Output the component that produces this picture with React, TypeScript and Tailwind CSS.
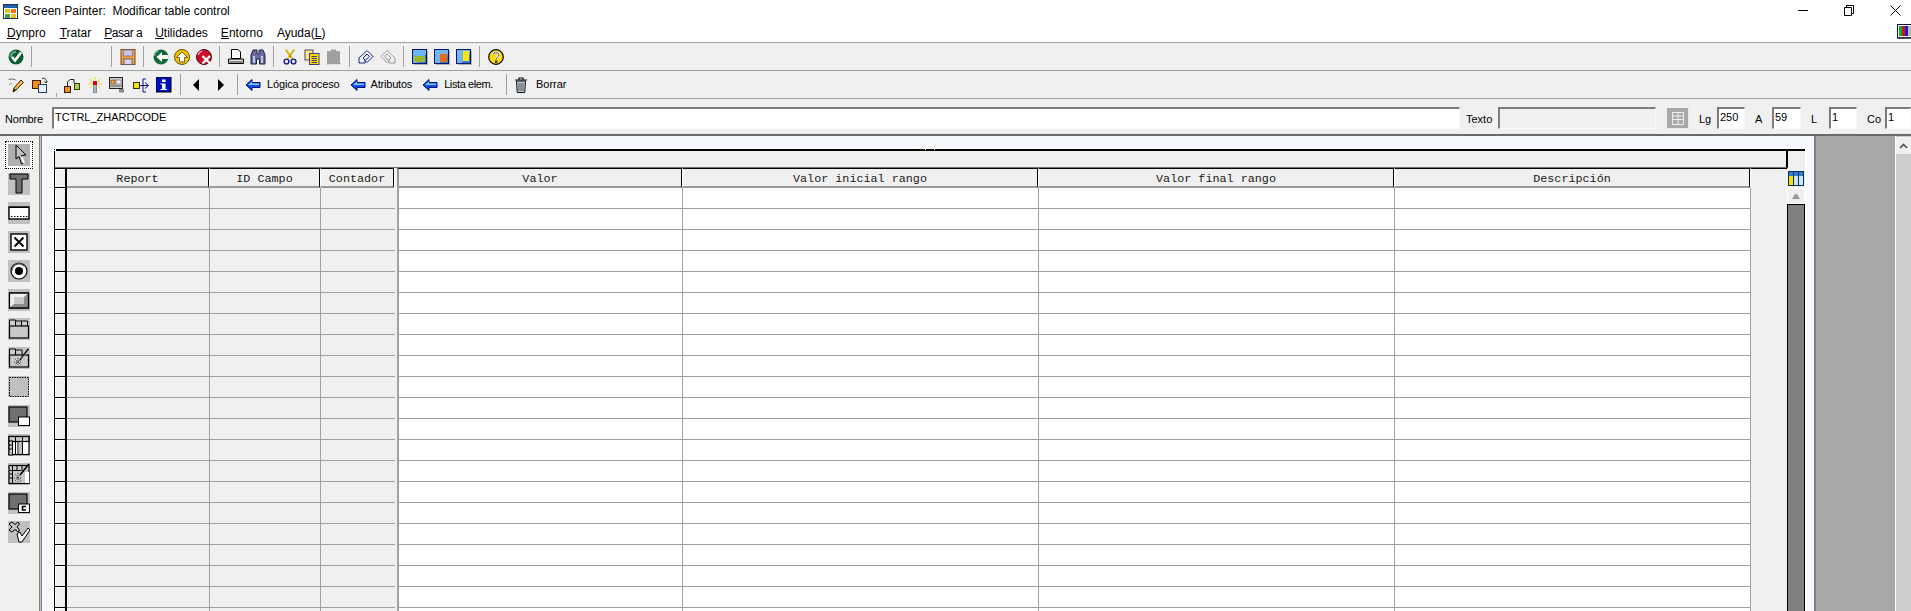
import React from "react";

const Ico = ({ children, w = 16, h = 16, cls = "" }: { children: React.ReactNode; w?: number; h?: number; cls?: string }) => (
  <svg width={w} height={h} viewBox={`0 0 ${w} ${h}`} className={"block shrink-0 " + cls}>{children}</svg>
);

const Sep = ({ cls }: { cls: string }) => <div className={"w-px h-[21px] bg-[#a0a0a0] shrink-0 " + cls} />;

const Arrow = ({ cls }: { cls: string }) => (
  <Ico cls={cls}>
    <path d="M1 8 L7 2.5 V5.5 H15 V10.5 H7 V13.5 Z" fill="#0a50f0" stroke="#000a78" strokeWidth="1" />
    <path d="M3 8 L7 4.5 V6.5 H14 V8 H3Z" fill="#8ccaff" />
  </Ico>
);

const Check = () => (
  <Ico>
    <circle cx="8" cy="8" r="7.5" fill="#0c5c34" />
    <path d="M1.5 8 A6.5 6.5 0 0 1 8 1.5 V4 A4 4 0 0 0 4 8Z" fill="#5fa77e" />
    <path d="M4 8 L7 11.5 L13 3.5" fill="none" stroke="#fff" strokeWidth="2.6" />
  </Ico>
);
const Save = () => (
  <Ico>
    <rect x="1" y="0.5" width="14" height="15" fill="#f0a040" stroke="#7a4a10" />
    <rect x="3.5" y="1" width="9" height="6" fill="#c9c5e8" stroke="#7a6a90" strokeWidth="0.7" />
    <rect x="4" y="10" width="8" height="5.5" fill="#d8d4f0" stroke="#5a4a70" strokeWidth="0.8" />
  </Ico>
);
const Back = () => (
  <Ico>
    <circle cx="8" cy="8" r="7.5" fill="#0c6a3c" />
    <path d="M3.5 8 L9 3 V6 H15.5 V10 H9 V13 Z" fill="#fff" />
    <path d="M1.5 7 A6.5 6.5 0 0 1 6 1.8" stroke="#6fb58c" strokeWidth="1.2" fill="none" />
  </Ico>
);
const Up = () => (
  <Ico>
    <circle cx="8" cy="8" r="7.5" fill="#f5c400" stroke="#6a5000" />
    <path d="M8 3 L13.5 8.5 H10.5 V13 H5.5 V8.5 H2.5 Z" fill="#fff" stroke="#403000" strokeWidth="0.7" />
  </Ico>
);
const Cancel = () => (
  <Ico>
    <circle cx="8" cy="8" r="7.5" fill="#c8102e" stroke="#4a0a10" />
    <path d="M2 6 A6 6 0 0 1 6 2" stroke="#ff9aa8" strokeWidth="1.5" fill="none" />
    <path d="M6.5 7 L14 14.5 M14 7 L6.5 14.5" stroke="#fff" strokeWidth="2.4" />
  </Ico>
);
const Print = () => (
  <Ico>
    <path d="M3.5 0.5 H10 L12.5 3 V9.5 H3.5Z" fill="#fff" stroke="#000" />
    <path d="M0.5 10 H15.5 V14.5 H0.5Z" fill="#e0e0e0" stroke="#000" />
    <rect x="1.5" y="12" width="13" height="2" fill="#8a8a8a" />
  </Ico>
);
const Find = () => (
  <Ico>
    <path d="M1 6 L3 1 H7 V5 H9 V1 H13 L15 6 V15 H9.5 V10 H6.5 V15 H1Z" fill="#6a6aa0" stroke="#20204a" />
    <rect x="3" y="7" width="2" height="7" fill="#c8c8e0" />
    <rect x="11" y="7" width="2" height="7" fill="#c8c8e0" />
  </Ico>
);
const Cut = () => (
  <Ico>
    <path d="M4 0.5 L10.5 10 M12 0.5 L5.5 10" stroke="#e8c800" strokeWidth="1.6" />
    <path d="M3.6 0.5 L9 9 M12.4 0.5 L7 9" stroke="#5a4a00" strokeWidth="0.4" />
    <circle cx="4.5" cy="12.5" r="2.4" fill="none" stroke="#1a1a9a" strokeWidth="1.4" />
    <circle cx="11.5" cy="12.5" r="2.4" fill="none" stroke="#1a1a9a" strokeWidth="1.4" />
  </Ico>
);
const Copy = () => (
  <Ico>
    <rect x="1" y="1" width="8" height="10" fill="#ffe680" stroke="#4a4a6a" />
    <rect x="5.5" y="4.5" width="9.5" height="11" fill="#ffe000" stroke="#3a3a80" />
    <path d="M7.5 7.5 H13 M7.5 9.5 H13 M7.5 11.5 H13 M7.5 13.5 H13" stroke="#3a3a80" strokeWidth="1" />
  </Ico>
);
const Paste = () => (
  <Ico>
    <path d="M1 2 H5 V0.5 H10 V2 H14 V14 H15.5 V15.5 H1Z" fill="#a0a0a0" />
    <path d="M15 5 H16 V16 H3 V15.5 H15Z" fill="#fff" />
  </Ico>
);
const Undo = ({ c }: { c: string }) => (
  <Ico>
    <path d="M1 9 L9 1.5 L15 7.5 L9 13.5 L7 11.5 L11.5 7.5 L9 5 L5 9 L7 11 V14 H1Z" fill="#f8f8ff" stroke={c} strokeWidth="1" />
  </Ico>
);
const Redo = ({ c }: { c: string }) => (
  <Ico>
    <path d="M15 9 L7 1.5 L1 7.5 L7 13.5 L9 11.5 L4.5 7.5 L7 5 L11 9 L9 11 V14 H15Z" fill="#f0f0f0" stroke={c} strokeWidth="1" />
  </Ico>
);
const Layout = ({ v }: { v: number }) => (
  <Ico>
    <rect x="0.5" y="0.5" width="14" height="14" fill="#2e7fd8" stroke="#00146e" />
    <path d="M1 1 H14 V5 L5 14 H1Z" fill="#6fb6ee" />
    <rect x="15" y="2" width="1" height="14" fill="#b0b0b0" />
    <rect x="2" y="15" width="14" height="1" fill="#b0b0b0" />
    {v === 1 && <rect x="2" y="7" width="11" height="6" fill="#9cb82c" />}
    {v === 2 && <rect x="6" y="5" width="7" height="8" fill="#f06a10" />}
    {v === 3 && <rect x="7" y="2" width="6" height="10" fill="#ffe400" />}
  </Ico>
);
const Help = () => (
  <Ico>
    <circle cx="8" cy="8" r="7.3" fill="#ffdc00" stroke="#000" strokeWidth="1.2" />
    <path d="M5 6 C5 3 11 3 11 6 C11 8 8 8 8 10.5" fill="none" stroke="#fff" strokeWidth="2.6" />
    <path d="M5 6 C5 3 11 3 11 6 C11 8 8 8 8 10.5" fill="none" stroke="#333" strokeWidth="0.9" />
    <rect x="7" y="11.5" width="2.4" height="2.4" fill="#333" />
  </Ico>
);
const Pencil = () => (
  <Ico>
    <path d="M5 15 L6 11 L13 3 L15.5 5.5 L8 13Z" fill="#f0b840" stroke="#402000" />
    <path d="M5 15 L6 11.5 L8 13Z" fill="#222" />
    <path d="M0.5 3 C2 0.5 3 4 4.5 1.5 C5.5 4 7 1 8 3.5" fill="none" stroke="#555" strokeWidth="1" />
    <path d="M1 8 C2 6 3 8 4 6" fill="none" stroke="#888" strokeWidth="1" />
  </Ico>
);
const Swap = () => (
  <Ico>
    <rect x="0.5" y="3.5" width="8" height="8" fill="#f08c20" stroke="#402000" />
    <rect x="6.5" y="7.5" width="8" height="8" fill="#e8f0ff" stroke="#30405a" />
    <path d="M10 1.5 C13 0.5 15 3 14 5.5 M12.5 4.5 L14 6 L15.5 4" fill="none" stroke="#333" />
  </Ico>
);
const Tree = () => (
  <Ico>
    <rect x="0.5" y="9.5" width="6" height="6" fill="#f08c20" stroke="#302000" />
    <rect x="10.5" y="6.5" width="5" height="6" fill="#b8c860" stroke="#304000" />
    <path d="M3.5 9 V5 L6 2.5 H10 V6" fill="none" stroke="#222" />
  </Ico>
);
const Wand = () => (
  <Ico>
    <rect x="6.5" y="6" width="3" height="10" fill="#a8b8c8" stroke="#506070" strokeWidth="0.6" />
    <rect x="6" y="4" width="4" height="4" fill="#e80000" />
    <path d="M8 0 V3 M2 2 L5 4.5 M14 2 L11 4.5 M1 7 H4.5 M12 7 H15 M3 11 L5 9.5 M13 11 L11 9.5" stroke="#f0e000" strokeWidth="1" />
  </Ico>
);
const Cols = () => (
  <Ico>
    <rect x="0.5" y="0.5" width="13" height="11" fill="#d0d0d0" stroke="#202020" />
    <rect x="2" y="3" width="4" height="4" fill="#f0a040" stroke="#402000" strokeWidth="0.5" />
    <rect x="7" y="3" width="5" height="4" fill="#eee" stroke="#404040" strokeWidth="0.5" />
    <path d="M1 9 H13" stroke="#505050" />
    <rect x="10" y="12" width="5" height="3.5" fill="#8a8a8a" />
  </Ico>
);
const Flow = () => (
  <Ico>
    <rect x="0.5" y="5.5" width="6" height="6" fill="#f0e020" stroke="#303000" />
    <path d="M7 8.5 H15 M12 5.5 L15.5 8.5 L12 11.5 M10 8 L10 2 L13 2 M10 9 V15 H13" fill="none" stroke="#101090" />
  </Ico>
);
const Info = () => (
  <Ico>
    <rect x="0" y="0" width="15" height="15" fill="#0010c0" stroke="#000" />
    <rect x="6" y="2.5" width="3.5" height="2.5" fill="#fff" />
    <path d="M4.5 6.5 H9.5 V12 H11 V13 H4.5 V12 H6 V7.5 H4.5Z" fill="#fff" />
  </Ico>
);
const Trash = () => (
  <Ico>
    <path d="M2 3 H14 M6 3 V1 H10 V3" fill="none" stroke="#111" strokeWidth="1.2" />
    <path d="M3.5 4 H12.5 L11.8 15.5 H4.2Z" fill="#c0c8d0" stroke="#111" />
    <path d="M6 6 V14 M8 6 V14 M10 6 V14" stroke="#505860" />
  </Ico>
);
const TriL = ({ cls }: { cls: string }) => (
  <Ico cls={cls}><path d="M5 8 L11 2 V14 Z" fill="#000" /></Ico>
);
const TriR = ({ cls }: { cls: string }) => (
  <Ico cls={cls}><path d="M5 2 L11 8 L5 14 Z" fill="#000" /></Ico>
);

const Tool = ({ children }: { children: React.ReactNode }) => (
  <div className="w-[22px] h-[22px] bg-[#c0c0c0] shrink-0">
    <svg width="22" height="22" viewBox="0 0 22 22" className="block">{children}</svg>
  </div>
);

const tools: React.ReactNode[] = [
  <path d="M2 1 H20 V6 H14 V20 H8 V6 H2Z" fill="#707070" stroke="#000" strokeWidth="1" />,
  <>
    <rect x="1" y="5" width="20" height="12" fill="#fff" stroke="#000" strokeWidth="1.4" />
    <path d="M3 14.5 H20" stroke="#000" strokeWidth="1" strokeDasharray="1.5 1.5" />
    <path d="M1.5 5.5 H20.5" stroke="#000" strokeWidth="1" />
  </>,
  <>
    <rect x="3" y="3" width="16" height="16" fill="#fff" stroke="#000" strokeWidth="1.4" />
    <path d="M6.5 6.5 L15.5 15.5 M15.5 6.5 L6.5 15.5" stroke="#000" strokeWidth="2" />
  </>,
  <>
    <circle cx="11" cy="11" r="8" fill="#fff" stroke="#000" strokeWidth="1.2" />
    <path d="M4 11 A7 7 0 0 1 16 6" fill="none" stroke="#555" strokeWidth="1.2" />
    <circle cx="11" cy="11" r="4" fill="#000" />
  </>,
  <>
    <rect x="1.5" y="4" width="19" height="15" fill="#c8c8c8" stroke="#000" strokeWidth="1.2" />
    <path d="M2 4.5 H20 L16 8 H6 V15.5 L2 18.5Z" fill="#f0f0f0" />
    <path d="M20 4.5 V18.5 H2 L6 15 H16 V8Z" fill="#8a8a8a" />
    <rect x="1.5" y="4" width="19" height="15" fill="none" stroke="#000" strokeWidth="1.2" />
  </>,
  <>
    <path d="M1.5 8 V2 H7.5 V8 M7.5 3 H19.5 V8 M13.5 3 V8" fill="#d0d0d0" stroke="#000" strokeWidth="1" />
    <rect x="1.5" y="8" width="19" height="12" fill="#c8c8c8" stroke="#000" strokeWidth="1.2" />
  </>,
  <>
    <path d="M1.5 8 V2 H7.5 V8 M7.5 3 H14 V8" fill="#d0d0d0" stroke="#000" strokeWidth="1" />
    <rect x="1.5" y="8" width="19" height="12" fill="#c8c8c8" stroke="#000" strokeWidth="1.2" />
    <path d="M12 13 L20.5 2" stroke="#000" strokeWidth="1.6" />
    <path d="M13 12 L21 3" stroke="#fff" strokeWidth="0.5" />
    <path d="M7 12 L13 18 M13 12 L7 18 M10 11 V19 M6 15 H14" stroke="#000" strokeWidth="0.7" strokeDasharray="1 1" />
  </>,
  <>
    <rect x="1.5" y="1.5" width="19" height="19" fill="#c0c0c0" stroke="#000" strokeWidth="1" strokeDasharray="1.5 1" />
    <path d="M0 21.5 H22 M21.5 0 V22" stroke="#fff" strokeWidth="1" />
  </>,
  <>
    <rect x="1" y="2" width="18" height="15" fill="#707070" stroke="#000" strokeWidth="1.2" />
    <rect x="10.5" y="12" width="11" height="8.5" fill="#fff" stroke="#000" strokeWidth="1" />
  </>,
  <>
    <rect x="1" y="2.5" width="20" height="18" fill="#fff" stroke="#000" strokeWidth="1.2" />
    <rect x="1" y="2.5" width="20" height="5" fill="#c8c8c8" stroke="#000" strokeWidth="1.2" />
    <rect x="1" y="7" width="3.5" height="14" fill="#c8c8c8" stroke="#000" strokeWidth="1" />
    <path d="M1 11 H4 M1 15 H4 M7.5 3 V20 M14.5 3 V20 M10 8 V20" stroke="#000" strokeWidth="1" />
    <rect x="11" y="8" width="3" height="12" fill="#c0c0c0" />
  </>,
  <>
    <rect x="1" y="2.5" width="20" height="18" fill="#c8c8c8" stroke="#000" strokeWidth="1.2" />
    <path d="M1 7.5 H13 M1 11 H5 M1 15 H5 M4.5 3 V20 M9 3 V7 M14 3 V8" stroke="#000" strokeWidth="1" />
    <rect x="17" y="9" width="4" height="11" fill="#fff" />
    <path d="M12 12 L21 1" stroke="#000" strokeWidth="1.6" />
    <path d="M7 11 L13 18 M13 11 L7 18 M10 10 V19 M6 15 H14" stroke="#000" strokeWidth="0.7" strokeDasharray="1 1" />
  </>,
  <>
    <rect x="1" y="2" width="18" height="15" fill="#707070" stroke="#000" strokeWidth="1.2" />
    <rect x="10.5" y="12" width="11" height="8.5" fill="#fff" stroke="#000" strokeWidth="1" />
    <path d="M18 14.5 H14.5 V18 H18" fill="none" stroke="#000" strokeWidth="1.6" />
  </>,
  <>
    <path d="M4 1 L7 3.5 L10 1 L11.5 3 L9 6 L11.5 9 L10 11 L7 8.5 L4 11 L1 9 L4 6 L1 3Z" fill="#c0c0c0" stroke="#000" strokeWidth="1" />
    <path d="M9 13 L12 11 L14 15 L20 7 L22 9 L14 21 H11Z" fill="#fff" stroke="#000" strokeWidth="1" />
  </>,
];

const F = ({ cls, children }: { cls: string; children?: React.ReactNode }) => (
  <div className={"h-[22px] border-t-2 border-l-2 border-t-[#7c7c7c] border-l-[#7c7c7c] border-r border-b border-r-[#fafafa] border-b-[#fafafa] pl-px leading-[16px] text-[11px] shrink-0 " + cls}>
    {children}
  </div>
);

const headerCls =
  "h-[20px] border-t border-black border-b-2 border-b-[#9a9a9a] border-r border-r-black text-center leading-[20px] shrink-0 font-['Liberation_Mono'] text-[11.75px] text-[#1a1a1a] bg-[#f0f0f0]";

const rows = Array.from({ length: 21 }, (_, i) => i);

export default function App() {
  return (
    <div className="w-[1911px] h-[611px] overflow-hidden bg-[#f0f0f0] flex flex-col font-['Liberation_Sans',sans-serif] text-black">
      {/* title bar */}
      <div className="h-[22px] bg-white flex items-center shrink-0 pl-[3px]">
        <Ico w={15} h={15}>
          <rect x="0.5" y="0.5" width="14" height="14" fill="#fff" stroke="#203060" />
          <rect x="1" y="1" width="13" height="3" fill="#2060b0" />
          <rect x="2" y="5" width="5" height="4" fill="#e8c020" />
          <rect x="8" y="5" width="5" height="4" fill="#f07020" />
          <rect x="2" y="10" width="5" height="4" fill="#50a040" />
          <rect x="8" y="10" width="5" height="4" fill="#e8c020" />
        </Ico>
        <span className="ml-[5px] text-[12px] whitespace-pre">Screen Painter:  Modificar table control</span>
        <div className="ml-auto flex items-center mb-[2px]">
          <Ico w={11} h={11}><path d="M0 5.5 H10" stroke="#000" /></Ico>
          <Ico w={11} h={11} cls="ml-[35px]">
            <path d="M0.5 2.5 H7.5 V10.5 H0.5Z M2.5 2.5 V0.5 H9.5 V8.5 H7.5" fill="none" stroke="#000" />
          </Ico>
          <Ico w={11} h={11} cls="ml-[35px] mr-[10px]">
            <path d="M0.5 0.5 L10.5 10.5 M10.5 0.5 L0.5 10.5" stroke="#000" />
          </Ico>
        </div>
      </div>
      {/* menu */}
      <div className="h-[20px] bg-white flex items-start shrink-0 pl-[7px] pt-[4px] gap-[14px] text-[12px] leading-[15px] relative">
        <span><span className="underline">D</span>ynpro</span>
        <span><span className="underline">T</span>ratar</span>
        <span className="tracking-[-0.5px] -ml-px"><span className="underline">P</span>asar a</span>
        <span className="-ml-px"><span className="underline">U</span>tilidades</span>
        <span className="-ml-px"><span className="underline">E</span>ntorno</span>
        <span>Ayuda(<span className="underline">L</span>)</span>
        <div className="ml-auto -mt-[2px]">
          <Ico w={14} h={15}>
            <rect x="0.5" y="0.5" width="14" height="13" fill="#fff" stroke="#101040" />
            <rect x="2" y="2" width="3" height="10" fill="#10b020" />
            <rect x="5" y="2" width="3" height="10" fill="#e01010" />
            <rect x="8" y="2" width="3" height="10" fill="#1020e0" />
            <rect x="11" y="2" width="3" height="10" fill="#bbb" />
            <rect x="0" y="13.5" width="14" height="1.5" fill="#505060" />
          </Ico>
        </div>
      </div>
      {/* toolbar 1 */}
      <div className="h-[28px] border-t border-[#a0a0a0] shadow-[0_-1px_0_#e0e0e0] flex items-center shrink-0 pl-[8px]">
        <Check />
        <Sep cls="ml-[7px]" />
        <Sep cls="ml-[79px]" />
        <div className="ml-[8px]"><Save /></div>
        <Sep cls="ml-[7px]" />
        <div className="ml-[9px]"><Back /></div>
        <div className="ml-[5px]"><Up /></div>
        <div className="ml-[6px]"><Cancel /></div>
        <Sep cls="ml-[7px]" />
        <div className="ml-[8px]"><Print /></div>
        <div className="ml-[6px]"><Find /></div>
        <Sep cls="ml-[7px]" />
        <div className="ml-[8px]"><Cut /></div>
        <div className="ml-[6px]"><Copy /></div>
        <div className="ml-[6px]"><Paste /></div>
        <Sep cls="ml-[7px]" />
        <div className="ml-[8px]"><Undo c="#10208a" /></div>
        <div className="ml-[6px]"><Redo c="#9a9a9a" /></div>
        <Sep cls="ml-[7px]" />
        <div className="ml-[8px]"><Layout v={1} /></div>
        <div className="ml-[6px]"><Layout v={2} /></div>
        <div className="ml-[6px]"><Layout v={3} /></div>
        <Sep cls="ml-[7px]" />
        <div className="ml-[8px]"><Help /></div>
      </div>
      {/* toolbar 2 */}
      <div className="h-[28px] border-t border-[#a0a0a0] flex items-center shrink-0 pl-[8px] text-[11px]">
        <Pencil />
        <div className="ml-[8px]"><Swap /></div>
        <div className="w-px h-[4px] bg-[#a0a0a0] ml-[8px] self-end mb-[1px]" />
        <div className="ml-[7px]"><Tree /></div>
        <div className="ml-[7px]"><Wand /></div>
        <div className="ml-[6px]"><Cols /></div>
        <div className="ml-[8px]"><Flow /></div>
        <div className="ml-[7px]"><Info /></div>
        <Sep cls="ml-[8px]" />
        <TriL cls="ml-[7px]" />
        <TriR cls="ml-[9px]" />
        <Sep cls="ml-[8px]" />
        <Arrow cls="ml-[7px]" />
        <span className="ml-[6px] tracking-[-0.15px]">Lógica proceso</span>
        <Arrow cls="ml-[10px]" />
        <span className="ml-[5px] tracking-[-0.2px]">Atributos</span>
        <Arrow cls="ml-[10px]" />
        <span className="ml-[6px] tracking-[-0.4px]">Lista elem.</span>
        <Sep cls="ml-[13px]" />
        <div className="ml-[6px]"><Trash /></div>
        <span className="ml-[7px]">Borrar</span>
      </div>
      {/* name row */}
      <div className="h-[38px] border-t border-[#a0a0a0] border-b-2 border-b-[#6a6a6a] flex items-start pt-[8px] shrink-0 text-[11px] leading-[24px]">
        <span className="w-[52px] pl-[5px] shrink-0 tracking-[-0.2px]">Nombre</span>
        <F cls="w-[1408px] bg-white">TCTRL_ZHARDCODE</F>
        <span className="ml-[6px] w-[32px] shrink-0">Texto</span>
        <F cls="w-[158px] bg-[#f0f0f0]" />
        <div className="ml-[11px] w-[22px] h-[21px] bg-[#a8a8a8] border-r border-b border-[#e8e8e8] mt-px flex items-center justify-center shrink-0">
          <Ico w={12} h={13}>
            <path d="M0.5 0.5 H11.5 V12.5 H0.5Z M6 0.5 V12.5 M0.5 4 H11.5 M0.5 7.5 H11.5" fill="none" stroke="#f0f0f0" />
          </Ico>
        </div>
        <span className="ml-[10px] w-[18px] shrink-0">Lg</span>
        <F cls="w-[28px] bg-white">250</F>
        <span className="ml-[10px] w-[17px] shrink-0">A</span>
        <F cls="w-[29px] bg-white">59</F>
        <span className="ml-[10px] w-[18px] shrink-0">L</span>
        <F cls="w-[28px] bg-white">1</F>
        <span className="ml-[10px] w-[18px] shrink-0">Co</span>
        <F cls="w-[26px] bg-white">1</F>
      </div>
      {/* main */}
      <div className="flex-1 min-h-0 flex overflow-hidden">
        {/* tools */}
        <div className="w-[39px] shrink-0 flex flex-col items-start pl-[8px] pt-[8px] gap-[7px]">
          <div className="relative w-[22px] h-[22px] bg-[#b0b0b0] outline-1 outline-dotted outline-black outline-offset-[2px] shadow-[0_0_0_4px_#fff]">
            <svg width="22" height="24" viewBox="0 0 22 24" className="block">
              <path d="M8 1 V15 L11 12.5 L13.5 20 L16 19 L13.5 11.5 L18 11Z" fill="#c0c0c0" stroke="#000" strokeWidth="1" />
              <path d="M13 13 L15.5 20 L17 19 L14.5 12Z" fill="#fff" />
            </svg>
          </div>
          {tools.map((t, i) => (
            <Tool key={i}>{t}</Tool>
          ))}
        </div>
        {/* divider */}
        <div className="w-[3px] shrink-0 bg-[#c4c4c4] border-x border-[#808080]" />
        {/* canvas */}
        <div className="w-[1772px] shrink-0 bg-[#f4f7fc] border-l border-white pl-[9px] pt-[11px]">
          <div className="w-[1755px] h-[600px] border-2 border-white border-r-[3px] relative">
            <div className="w-[1751px] flex flex-col bg-[#f0f0f0]">
              {/* title row */}
              <div className="h-[19px] border-t-2 border-black flex shrink-0">
                <div className="w-[1734px] border-l border-black border-r-2 border-r-black border-b border-b-[#707070]" />
                <div className="flex-1" />
              </div>
              {/* grid */}
              <div className="flex">
                <div className="w-[1733px] shrink-0">
                  {/* header */}
                  <div className="flex">
                    <div className="w-[13px] h-[20px] border-t border-black border-l border-r-2 border-r-black border-b border-b-black shadow-[inset_1px_1px_0_#fff] shrink-0" />
                    <div className={headerCls + " w-[142px]"}>Report</div>
                    <div className={headerCls + " w-[111px] border-l border-l-white"}>ID Campo</div>
                    <div className={headerCls + " w-[74px] border-l border-l-white"}>Contador</div>
                    <div className="w-[3px] h-[20px] bg-[#f0f0f0] border-l border-white shrink-0" />
                    <div className={headerCls + " w-[285px] border-l-2 border-l-[#9a9a9a]"}>Valor</div>
                    <div className={headerCls + " w-[356px] border-l border-l-white"}>Valor inicial rango</div>
                    <div className={headerCls + " w-[356px] border-l border-l-white"}>Valor final rango</div>
                    <div className={headerCls + " w-[356px] border-l border-l-white"}>Descripción</div>
                    <div className="flex-1 h-[20px] border-t border-black border-l border-l-white" />
                  </div>
                  {/* body */}
                  {rows.map((r) => (
                    <div key={r} className="flex h-[21px]">
                      <div className="w-[13px] border-l border-black border-r-2 border-r-black border-b border-b-black shadow-[inset_1px_1px_0_#fff] shrink-0" />
                      <div className="w-[143px] border-r border-b border-[#a0a0a0] shrink-0" />
                      <div className="w-[111px] border-r border-b border-[#a0a0a0] shrink-0" />
                      <div className="w-[74px] border-b border-[#a0a0a0] shrink-0" />
                      <div className="w-[2px] shrink-0" />
                      <div className="w-[286px] bg-white border-l-2 border-l-[#a0a0a0] border-r border-b border-[#a0a0a0] border-b-[#a0a0a0] shrink-0" />
                      <div className="w-[356px] bg-white border-r border-b border-[#a0a0a0] shrink-0" />
                      <div className="w-[356px] bg-white border-r border-b border-[#a0a0a0] shrink-0" />
                      <div className="w-[356px] bg-white border-r border-b border-[#a0a0a0] shrink-0" />
                      <div className="flex-1" />
                    </div>
                  ))}
                </div>
                {/* table scrollbar */}
                <div className="w-[18px] shrink-0 flex flex-col">
                  <div className="h-[20px] pt-[3px] pl-px shrink-0">
                    <Ico w={16} h={15}>
                      <rect x="0.5" y="0.5" width="15" height="14" fill="#cfe6f5" stroke="#003060" />
                      <rect x="1" y="1" width="14" height="4" fill="#2f7fc8" />
                      <rect x="1" y="5" width="4" height="9" fill="#ffe000" />
                      <path d="M5.5 1 V14 M10.5 1 V14" stroke="#003060" strokeWidth="1" />
                    </Ico>
                  </div>
                  <div className="h-[16px] bg-[#f0f0f0] border border-white flex items-center justify-center shrink-0">
                    <Ico w={8} h={5}><path d="M0 5 L3 0 H5 L8 5Z" fill="#9a9a9a" /></Ico>
                  </div>
                  <div className="h-[430px] bg-[#808080] border-t border-black border-l border-r border-l-black border-r-black" />
                </div>
              </div>
            </div>
            <div className="absolute left-[871px] top-[-4px] w-[10px] h-[5px] border border-white border-b-0" />
            <div className="absolute left-[-2px] top-[-2px] w-[4px] h-[4px] border border-white" />
          </div>
        </div>
        {/* outer gray */}
        <div className="flex-1 bg-[#a8a8a8] border-l-2 border-[#808080] border-r border-r-white" />
        {/* outer scrollbar */}
        <div className="w-[15px] shrink-0 bg-[#cdcdcd] flex flex-col">
          <div className="h-[17px] bg-[#f0f0f0] flex items-center justify-center shrink-0 mt-px">
            <Ico w={9} h={6}><path d="M1 5 L4.5 1.5 L8 5" fill="none" stroke="#505050" strokeWidth="1.6" /></Ico>
          </div>
        </div>
      </div>
    </div>
  );
}
